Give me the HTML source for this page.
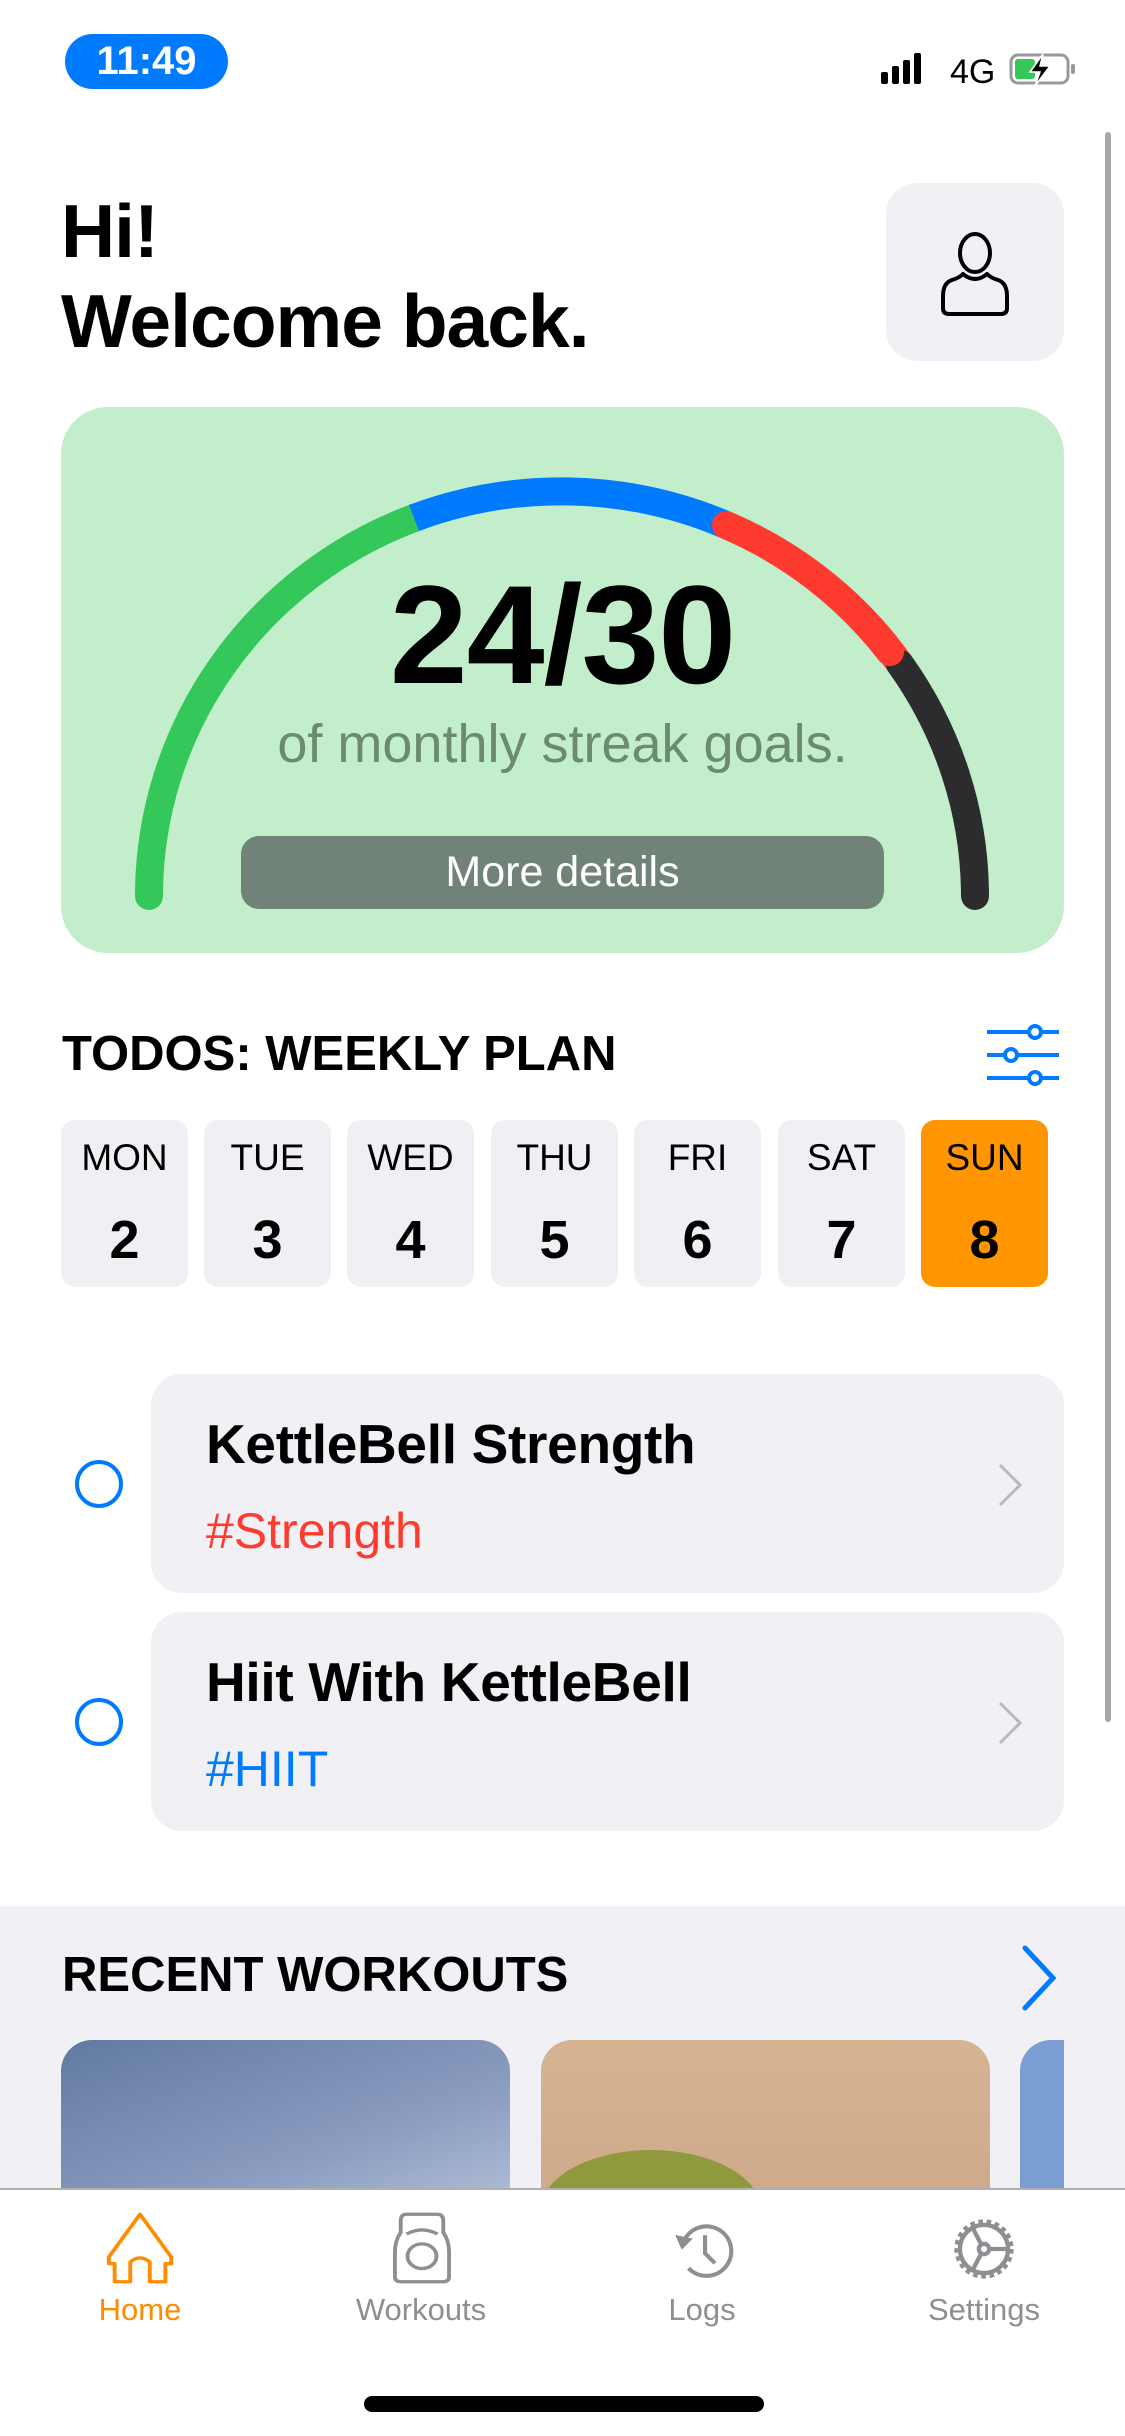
<!DOCTYPE html>
<html><head><meta charset="utf-8"><style>
*{margin:0;padding:0;box-sizing:border-box}
body{width:1125px;height:2436px;overflow:hidden;background:#fff;font-family:"Liberation Sans",sans-serif;position:relative;color:#000}
.abs{position:absolute}
.day{position:absolute;top:1120px;width:127px;height:167px;background:#efeff4;border-radius:14px;text-align:center}
.day .l{position:absolute;top:17px;left:0;right:0;font-size:37px}
.day .n{position:absolute;top:89px;left:0;right:0;font-size:54px;font-weight:bold}
.card{position:absolute;left:151px;width:913px;height:219px;background:#f0f0f5;border-radius:31px}
.card .t{position:absolute;left:55px;top:38px;font-size:55px;font-weight:bold;letter-spacing:-.3px}
.card .g{position:absolute;left:55px;top:128px;font-size:50px}
.circ{position:absolute;left:75px;width:48px;height:48px;border:4px solid #007aff;border-radius:50%}
.tab{position:absolute;top:2292px;font-size:31px;color:#8e8e93;width:200px;text-align:center}
</style></head><body>
<!-- status bar -->
<div class="abs" style="left:65px;top:34px;width:163px;height:55px;background:#007aff;border-radius:28px;color:#fff;font-size:40px;text-align:center;line-height:55px;font-weight:bold">11:49</div>
<svg class="abs" style="left:880px;top:50px" width="200" height="40" viewBox="0 0 200 40">
<rect x="1" y="22" width="7" height="12" rx="2"/><rect x="12" y="16" width="7" height="18" rx="2"/><rect x="23" y="10" width="7" height="24" rx="2"/><rect x="34" y="3" width="7" height="31" rx="2"/>
<text x="70" y="33" font-size="34" font-family="Liberation Sans">4G</text>
<rect x="131" y="5" width="57" height="28" rx="7" fill="none" stroke="#999" stroke-width="3"/>
<rect x="135" y="9" width="20" height="20" rx="3" fill="#34c759"/>
<rect x="191" y="14" width="4" height="10" rx="2" fill="#999"/>
<path d="M163 4 L150 22 L160 22 L155 36 L170 16 L160 16 Z" fill="#000" stroke="#fff" stroke-width="1.5"/>
</svg>
<div class="abs" style="left:1105px;top:132px;width:6px;height:1590px;background:#a8a8a8;border-radius:3px"></div>
<!-- header -->
<div class="abs" style="left:61px;top:186px;font-size:75px;font-weight:bold;line-height:90px;letter-spacing:-1px">Hi!<br>Welcome back.</div>
<div class="abs" style="left:886px;top:183px;width:178px;height:178px;background:#f0f0f5;border-radius:31px"></div>
<svg class="abs" style="left:935px;top:228px" width="80" height="90" viewBox="0 0 80 90">
<ellipse cx="40" cy="25" rx="15" ry="19" fill="none" stroke="#000" stroke-width="4"/>
<path d="M28 46 Q24 50 17 52 Q8 55 8 68 L8 80 Q8 86 14 86 L66 86 Q72 86 72 80 L72 68 Q72 55 63 52 Q56 50 52 46 Q40 56 28 46 Z" fill="none" stroke="#000" stroke-width="4" stroke-linejoin="round"/>
</svg>
<!-- streak card -->
<div class="abs" style="left:61px;top:407px;width:1003px;height:546px;background:#c2eecb;border-radius:47px"></div>
<svg class="abs" style="left:0;top:0" width="1125" height="1000">
<g fill="none" stroke-width="28" stroke-linecap="round">
<path d="M149 896 A413 405 0 0 1 414 518" stroke="#34c759"/>
<path d="M414 518 A413 405 0 0 1 726 525" stroke="#007aff" stroke-linecap="butt"/>
<path d="M726 525 A413 405 0 0 1 900 664" stroke="#ff3b30" stroke-linecap="butt"/>
<path d="M900 664 A413 405 0 0 1 975 896" stroke="#2c2c2e"/>
<path d="M726 525 A413 405 0 0 1 890 652" stroke="#ff3b30"/>
</g></svg>
<div class="abs" style="left:0;width:1125px;top:554px;text-align:center;font-size:140px;font-weight:bold;letter-spacing:-1px">24/30</div>
<div class="abs" style="left:0;width:1125px;top:713px;text-align:center;font-size:54px;color:#6b8a70">of monthly streak goals.</div>
<div class="abs" style="left:241px;top:836px;width:643px;height:73px;background:#718379;border-radius:18px;color:#fff;font-size:43px;text-align:center;line-height:73px">More details</div>
<!-- todos -->
<div class="abs" style="left:62px;top:1026px;font-size:49px;font-weight:bold">TODOS: WEEKLY PLAN</div>
<svg class="abs" style="left:985px;top:1024px" width="76" height="62" viewBox="0 0 76 62" fill="none" stroke="#007aff" stroke-width="4">
<line x1="2" y1="8" x2="74" y2="8"/><line x1="2" y1="31" x2="74" y2="31"/><line x1="2" y1="54" x2="74" y2="54"/>
<circle cx="50" cy="8" r="6" fill="#fff"/><circle cx="26" cy="31" r="6" fill="#fff"/><circle cx="50" cy="54" r="6" fill="#fff"/>
</svg>
<div class="day" style="left:61px"><div class="l">MON</div><div class="n">2</div></div>
<div class="day" style="left:204px"><div class="l">TUE</div><div class="n">3</div></div>
<div class="day" style="left:347px"><div class="l">WED</div><div class="n">4</div></div>
<div class="day" style="left:491px"><div class="l">THU</div><div class="n">5</div></div>
<div class="day" style="left:634px"><div class="l">FRI</div><div class="n">6</div></div>
<div class="day" style="left:778px"><div class="l">SAT</div><div class="n">7</div></div>
<div class="day" style="left:921px;background:#ff9500"><div class="l">SUN</div><div class="n">8</div></div>
<div class="circ" style="top:1460px"></div>
<div class="card" style="top:1374px"><div class="t">KettleBell Strength</div><div class="g" style="color:#ff3b30">#Strength</div>
<svg class="abs" style="left:845px;top:88px" width="30" height="46" viewBox="0 0 30 46"><path d="M4 3 L24 23 L4 43" fill="none" stroke="#b8b8bd" stroke-width="3"/></svg></div>
<div class="circ" style="top:1698px"></div>
<div class="card" style="top:1612px"><div class="t">Hiit With KettleBell</div><div class="g" style="color:#007aff">#HIIT</div>
<svg class="abs" style="left:845px;top:88px" width="30" height="46" viewBox="0 0 30 46"><path d="M4 3 L24 23 L4 43" fill="none" stroke="#b8b8bd" stroke-width="3"/></svg></div>
<!-- recent -->
<div class="abs" style="left:0;top:1906px;width:1125px;height:290px;background:#f0f0f5"></div>
<div class="abs" style="left:62px;top:1947px;font-size:49px;font-weight:bold">RECENT WORKOUTS</div>
<svg class="abs" style="left:1020px;top:1945px" width="40" height="66" viewBox="0 0 40 66"><path d="M5 3 L33 33 L5 63" fill="none" stroke="#007aff" stroke-width="5" stroke-linecap="round"/></svg>
<div class="abs" style="left:61px;top:2040px;width:449px;height:180px;border-radius:31px 31px 0 0;background:linear-gradient(160deg,#627aa0,#8a9cc0 60%,#b5c2d8)"></div>
<div class="abs" style="left:541px;top:2040px;width:449px;height:180px;border-radius:31px 31px 0 0;background:linear-gradient(180deg,#d6b493,#cda889);overflow:hidden"><div style="position:absolute;left:0;top:110px;width:220px;height:120px;border-radius:50%;background:#8f9a3e"></div></div>
<div class="abs" style="left:1020px;top:2040px;width:44px;height:180px;border-radius:31px 0 0 0;background:#7b9ed2"></div>
<!-- tab bar -->
<div class="abs" style="left:0;top:2188px;width:1125px;height:248px;background:#fff;border-top:2px solid #b0b0b0"></div>
<svg class="abs" style="left:101px;top:2211px" width="78" height="74" viewBox="0 0 80 90" preserveAspectRatio="none" fill="none" stroke="#ff8c00" stroke-width="4" stroke-linejoin="round">
<path d="M40 4 L8 56 L8 64 L14 64 L14 86 L30 86 L30 62 Q40 52 50 62 L50 86 L66 86 L66 64 L72 64 L72 56 Z"/></svg>
<svg class="abs" style="left:393px;top:2211px" width="58" height="74" viewBox="0 0 60 90" preserveAspectRatio="none" fill="none" stroke="#8e8e93" stroke-width="4">
<path d="M14 4 L46 4 Q52 4 52 12 L52 26 Q58 36 58 50 L58 80 Q58 86 52 86 L8 86 Q2 86 2 80 L2 50 Q2 36 8 26 L8 12 Q8 4 14 4 Z"/><path d="M14 28 Q30 18 46 28"/><circle cx="30" cy="55" r="15"/></svg>
<svg class="abs" style="left:668px;top:2217px" width="70" height="66" viewBox="0 0 75 80" fill="none" stroke="#8e8e93" stroke-width="5">
<path d="M14 30 A30 30 0 1 1 20 62"/><path d="M5 22 L12 38 L24 26" fill="#8e8e93" stroke-width="2"/><path d="M40 22 L40 44 L52 56"/></svg>
<svg class="abs" style="left:949px;top:2212px" width="70" height="74" viewBox="0 0 76 86" fill="none" stroke="#8e8e93" stroke-width="5">
<circle cx="38" cy="43" r="30" stroke-dasharray="5 4" stroke-width="9"/><circle cx="38" cy="43" r="28"/><circle cx="38" cy="43" r="6"/><path d="M44 43 L68 43 M35 38 L24 17 M35 48 L24 69"/></svg>
<div class="tab" style="left:40px;color:#ff8c00">Home</div>
<div class="tab" style="left:321px">Workouts</div>
<div class="tab" style="left:602px">Logs</div>
<div class="tab" style="left:884px">Settings</div>
<div class="abs" style="left:364px;top:2396px;width:400px;height:16px;background:#000;border-radius:8px"></div>
</body></html>
